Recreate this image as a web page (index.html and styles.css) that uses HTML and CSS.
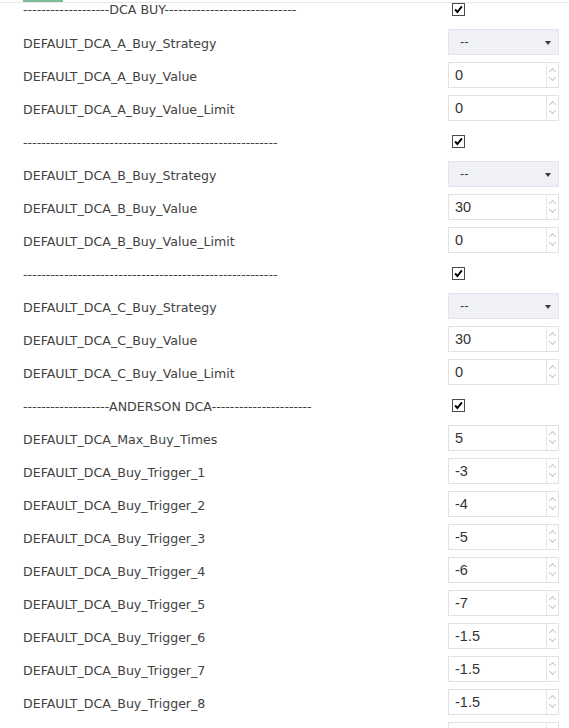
FILE: index.html
```html
<!DOCTYPE html>
<html>
<head>
<meta charset="utf-8">
<link rel="stylesheet" href="styles.css">
</head>
<body>
<div class="tabbar"><div class="tab-active"></div></div>
<div class="form">
  <div class="row first"><div class="label">-------------------DCA BUY-----------------------------</div><div class="ctl"><span class="check"><svg viewBox="0 0 13 13" width="13" height="13"><path d="M2.5 6.5 L5.2 9.5 L10.5 2.8" fill="none" stroke="#000" stroke-width="2.3"/></svg></span></div></div>
  <div class="row"><div class="label">DEFAULT_DCA_A_Buy_Strategy</div><div class="ctl"><div class="select">--<span class="caret"></span></div></div></div>
  <div class="row"><div class="label">DEFAULT_DCA_A_Buy_Value</div><div class="ctl"><div class="num"><span class="val">0</span><span class="spin"><i class="up"></i><i class="down"></i></span></div></div></div>
  <div class="row"><div class="label">DEFAULT_DCA_A_Buy_Value_Limit</div><div class="ctl"><div class="num"><span class="val">0</span><span class="spin"><i class="up"></i><i class="down"></i></span></div></div></div>
  <div class="row"><div class="label">--------------------------------------------------------</div><div class="ctl"><span class="check"><svg viewBox="0 0 13 13" width="13" height="13"><path d="M2.5 6.5 L5.2 9.5 L10.5 2.8" fill="none" stroke="#000" stroke-width="2.3"/></svg></span></div></div>
  <div class="row"><div class="label">DEFAULT_DCA_B_Buy_Strategy</div><div class="ctl"><div class="select">--<span class="caret"></span></div></div></div>
  <div class="row"><div class="label">DEFAULT_DCA_B_Buy_Value</div><div class="ctl"><div class="num"><span class="val">30</span><span class="spin"><i class="up"></i><i class="down"></i></span></div></div></div>
  <div class="row"><div class="label">DEFAULT_DCA_B_Buy_Value_Limit</div><div class="ctl"><div class="num"><span class="val">0</span><span class="spin"><i class="up"></i><i class="down"></i></span></div></div></div>
  <div class="row"><div class="label">--------------------------------------------------------</div><div class="ctl"><span class="check"><svg viewBox="0 0 13 13" width="13" height="13"><path d="M2.5 6.5 L5.2 9.5 L10.5 2.8" fill="none" stroke="#000" stroke-width="2.3"/></svg></span></div></div>
  <div class="row"><div class="label">DEFAULT_DCA_C_Buy_Strategy</div><div class="ctl"><div class="select">--<span class="caret"></span></div></div></div>
  <div class="row"><div class="label">DEFAULT_DCA_C_Buy_Value</div><div class="ctl"><div class="num"><span class="val">30</span><span class="spin"><i class="up"></i><i class="down"></i></span></div></div></div>
  <div class="row"><div class="label">DEFAULT_DCA_C_Buy_Value_Limit</div><div class="ctl"><div class="num"><span class="val">0</span><span class="spin"><i class="up"></i><i class="down"></i></span></div></div></div>
  <div class="row"><div class="label">-------------------ANDERSON DCA----------------------</div><div class="ctl"><span class="check"><svg viewBox="0 0 13 13" width="13" height="13"><path d="M2.5 6.5 L5.2 9.5 L10.5 2.8" fill="none" stroke="#000" stroke-width="2.3"/></svg></span></div></div>
  <div class="row"><div class="label">DEFAULT_DCA_Max_Buy_Times</div><div class="ctl"><div class="num"><span class="val">5</span><span class="spin"><i class="up"></i><i class="down"></i></span></div></div></div>
  <div class="row"><div class="label">DEFAULT_DCA_Buy_Trigger_1</div><div class="ctl"><div class="num"><span class="val">-3</span><span class="spin"><i class="up"></i><i class="down"></i></span></div></div></div>
  <div class="row"><div class="label">DEFAULT_DCA_Buy_Trigger_2</div><div class="ctl"><div class="num"><span class="val">-4</span><span class="spin"><i class="up"></i><i class="down"></i></span></div></div></div>
  <div class="row"><div class="label">DEFAULT_DCA_Buy_Trigger_3</div><div class="ctl"><div class="num"><span class="val">-5</span><span class="spin"><i class="up"></i><i class="down"></i></span></div></div></div>
  <div class="row"><div class="label">DEFAULT_DCA_Buy_Trigger_4</div><div class="ctl"><div class="num"><span class="val">-6</span><span class="spin"><i class="up"></i><i class="down"></i></span></div></div></div>
  <div class="row"><div class="label">DEFAULT_DCA_Buy_Trigger_5</div><div class="ctl"><div class="num"><span class="val">-7</span><span class="spin"><i class="up"></i><i class="down"></i></span></div></div></div>
  <div class="row"><div class="label">DEFAULT_DCA_Buy_Trigger_6</div><div class="ctl"><div class="num"><span class="val">-1.5</span><span class="spin"><i class="up"></i><i class="down"></i></span></div></div></div>
  <div class="row"><div class="label">DEFAULT_DCA_Buy_Trigger_7</div><div class="ctl"><div class="num"><span class="val">-1.5</span><span class="spin"><i class="up"></i><i class="down"></i></span></div></div></div>
  <div class="row"><div class="label">DEFAULT_DCA_Buy_Trigger_8</div><div class="ctl"><div class="num"><span class="val">-1.5</span><span class="spin"><i class="up"></i><i class="down"></i></span></div></div></div>
  <div class="row"><div class="label"></div><div class="ctl"><div class="num"><span class="val"></span><span class="spin"><i class="up"></i><i class="down"></i></span></div></div></div>
</div>
</body>
</html>
```
FILE: styles.css
```css
html, body {
  margin: 0;
  padding: 0;
  background: #ffffff;
  overflow: hidden;
}
body {
  font-family: "DejaVu Sans", Verdana, sans-serif;
  color: #424242;
}
.tabbar {
  height: 2px;
  border-bottom: 1px solid #e6e6e6;
  padding-left: 23px;
  margin-right: 1px;
}
.tab-active {
  width: 40px;
  height: 2px;
  background: #7dbd99;
}
.form {
  display: flex;
  flex-direction: column;
}
.row {
  display: grid;
  grid-template-columns: 1fr 111px;
  align-items: center;
  height: 26px;
  margin-bottom: 7px;
  padding: 0 10px 0 23px;
}
.row.first {
  height: 13px;
  margin-bottom: 13px;
}
.label {
  font-size: 12.6px;
  line-height: 13px;
  padding-top: 2px;
  white-space: nowrap;
  overflow: visible;
}
.row.first .label {
  padding-top: 0;
}
.ctl {
  height: 100%;
  display: flex;
  align-items: center;
}
.check {
  display: block;
  width: 11px;
  height: 11px;
  margin-left: 4px;
  border: 1px solid #4a4a4a;
  background: #fff;
}
.check svg {
  display: block;
  width: 11px;
  height: 11px;
}
.select {
  box-sizing: border-box;
  width: 111px;
  height: 26px;
  border: 1px solid #e2e4ea;
  background: #eff1f6;
  font-family: "Liberation Sans", Arial, sans-serif;
  font-size: 13px;
  color: #444;
  padding-left: 11px;
  line-height: 24px;
  position: relative;
}
.caret {
  position: absolute;
  right: 7px;
  top: 11px;
  width: 0;
  height: 0;
  border-left: 3.5px solid transparent;
  border-right: 3.5px solid transparent;
  border-top: 4px solid #3a3a3a;
}
.num {
  box-sizing: border-box;
  width: 111px;
  height: 26px;
  border: 1px solid #e1e1e1;
  background: #fff;
  display: flex;
}
.val {
  flex: 1;
  font-family: "Liberation Sans", Arial, sans-serif;
  font-size: 14.5px;
  color: #333;
  padding-left: 6px;
  line-height: 25px;
}
.spin {
  width: 11px;
  border-left: 1px solid #e6e6e6;
  display: flex;
  flex-direction: column;
  align-items: center;
  justify-content: space-around;
  padding: 3px 0;
}
.spin i {
  display: block;
  width: 4px;
  height: 4px;
  border-left: 1px solid #c4c4c4;
  border-top: 1px solid #c4c4c4;
}
.spin .up {
  transform: translateY(1px) rotate(45deg);
}
.spin .down {
  transform: translateY(-2px) rotate(225deg);
}
```
